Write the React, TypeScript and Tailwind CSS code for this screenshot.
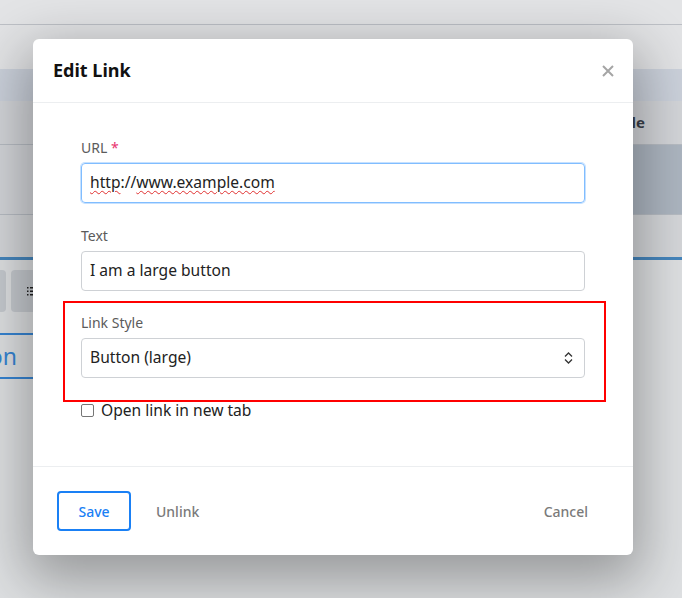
import React from "react";

const font = { fontFamily: "'Noto Sans', 'Open Sans', sans-serif" };

function Background() {
  return (
    <div className="flex flex-col w-full h-[598px] bg-[#e9ebee]">
      <div className="h-[25px] bg-[#f2f3f5] border-b border-[#c9ccd3]" />
      <div className="h-[44px] bg-[#f1f2f4]" />
      <div className="h-[32px] bg-[#d8dfe9]" />
      <div className="h-[44px] bg-[#e1e3e7] border-b border-[#c3c8d0] flex justify-end items-center pr-[37px]">
        <span className="text-[15px] font-bold text-[#3e4650]" style={font}>le</span>
      </div>
      <div className="h-[70px] flex border-b border-[#c3c8d0]">
        <div className="w-[300px] bg-[#e1e3e7]" />
        <div className="flex-1 bg-[#b8c2ce]" />
      </div>
      <div className="h-[42px] bg-[#e3e5e8]" />
      <div className="h-[3px] bg-[#4b8fc9]" />
      <div className="flex-1 bg-[#eceef1] flex flex-col">
        <div className="flex gap-[5px] pt-[10px] ml-[-12px]">
          <div className="w-[18px] h-[42px] rounded bg-[#d3d7dc]" />
          <div className="w-[60px] h-[42px] rounded bg-[#d3d7dc] flex items-center pl-[16px]">
            <svg width="8" height="9" viewBox="0 0 8 9">
              <rect x="0" y="0" width="1.5" height="1.5" fill="#222" />
              <rect x="0" y="3.5" width="1.5" height="1.5" fill="#222" />
              <rect x="0" y="7" width="1.5" height="1.5" fill="#222" />
              <rect x="3" y="0" width="5" height="1.5" fill="#222" />
              <rect x="3" y="3.5" width="5" height="1.5" fill="#222" />
              <rect x="3" y="7" width="5" height="1.5" fill="#222" />
            </svg>
          </div>
        </div>
        <div className="mt-[21px] ml-[-60px] w-[97px] h-[46px] border-2 border-[#3a8de0] rounded-[3px] flex items-center justify-end pr-[18px]">
          <span className="text-[23px] leading-none text-[#3a8de0]" style={font}>on</span>
        </div>
      </div>
    </div>
  );
}

function Label({ children }: { children: React.ReactNode }) {
  return (
    <div className="text-[14px] leading-5 text-[#5b5b5b] mb-[5px]" style={font}>
      {children}
    </div>
  );
}

export default function App() {
  return (
    <div className="relative w-[682px] h-[598px] overflow-hidden">
      <Background />
      <div className="absolute inset-0 bg-black/[0.06] pl-[33px] pt-[39px]">
        <div
          className="w-[600px] h-[516px] bg-white rounded-[6px] shadow-[0_18px_55px_8px_rgba(0,0,0,0.32)] flex flex-col"
          style={font}
        >
          <div className="h-[64px] border-b border-[#eceef0] flex items-center justify-between pl-[20px] pr-[19px]">
            <span className="text-[18px] font-bold text-[#111]">Edit Link</span>
            <svg width="12" height="12" viewBox="0 0 12 12">
              <path d="M1 1L11 11M11 1L1 11" stroke="#a5a5a5" strokeWidth="2" />
            </svg>
          </div>
          <div className="flex-1 px-[48px] pt-[35px] text-[15.6px]">
            <div className="mb-[23px]">
              <Label>
                URL <span className="text-[#e8336e]">*</span>
              </Label>
              <div className="h-[40px] border border-[#80bdff] rounded-[4px] shadow-[0_0_0_1px_rgba(128,189,255,0.45)] flex items-center px-[8px] text-[#222]">
                <span className="underline decoration-wavy decoration-[#e03030] decoration-1 underline-offset-2">http</span>
                <span>://</span>
                <span className="underline decoration-wavy decoration-[#e03030] decoration-1 underline-offset-2">www.example.com</span>
              </div>
            </div>
            <div className="mb-[22px]">
              <Label>Text</Label>
              <div className="h-[40px] border border-[#ced1d5] rounded-[4px] flex items-center px-[8px] text-[#222]">
                I am a large button
              </div>
            </div>
            <div className="relative mb-[20px]">
              <div className="absolute left-[-18px] right-[-21px] top-[-12px] bottom-[-24px] border-2 border-[#ff0000] pointer-events-none" />
              <Label>Link Style</Label>
              <div className="h-[40px] border border-[#ced1d5] rounded-[4px] flex items-center justify-between pl-[8px] pr-[11px] text-[#222]">
                <span>Button (large)</span>
                <svg width="9" height="12" viewBox="0 0 9 12">
                  <path d="M1 4.5L4.5 1L8 4.5M1 7.5L4.5 11L8 7.5" fill="none" stroke="#333" strokeWidth="1.3" />
                </svg>
              </div>
            </div>
            <div className="flex items-center gap-[7px] leading-6 text-[#222]">
              <span className="w-[13px] h-[13px] border border-[#767676] rounded-[2px] bg-white" />
              <span>Open link in new tab</span>
            </div>
          </div>
          <div className="h-[89px] border-t border-[#eceef0] flex items-center pl-[24px] pr-[45px]">
            <div className="w-[74px] h-[40px] border-2 border-[#1a80f5] rounded-[4px] flex items-center justify-center text-[14px] font-medium text-[#1a80f5]">
              Save
            </div>
            <span className="ml-[25px] text-[14px] font-medium text-[#7a7a7a]">Unlink</span>
            <span className="ml-auto text-[14px] font-medium text-[#7a7a7a]">Cancel</span>
          </div>
        </div>
      </div>
    </div>
  );
}
